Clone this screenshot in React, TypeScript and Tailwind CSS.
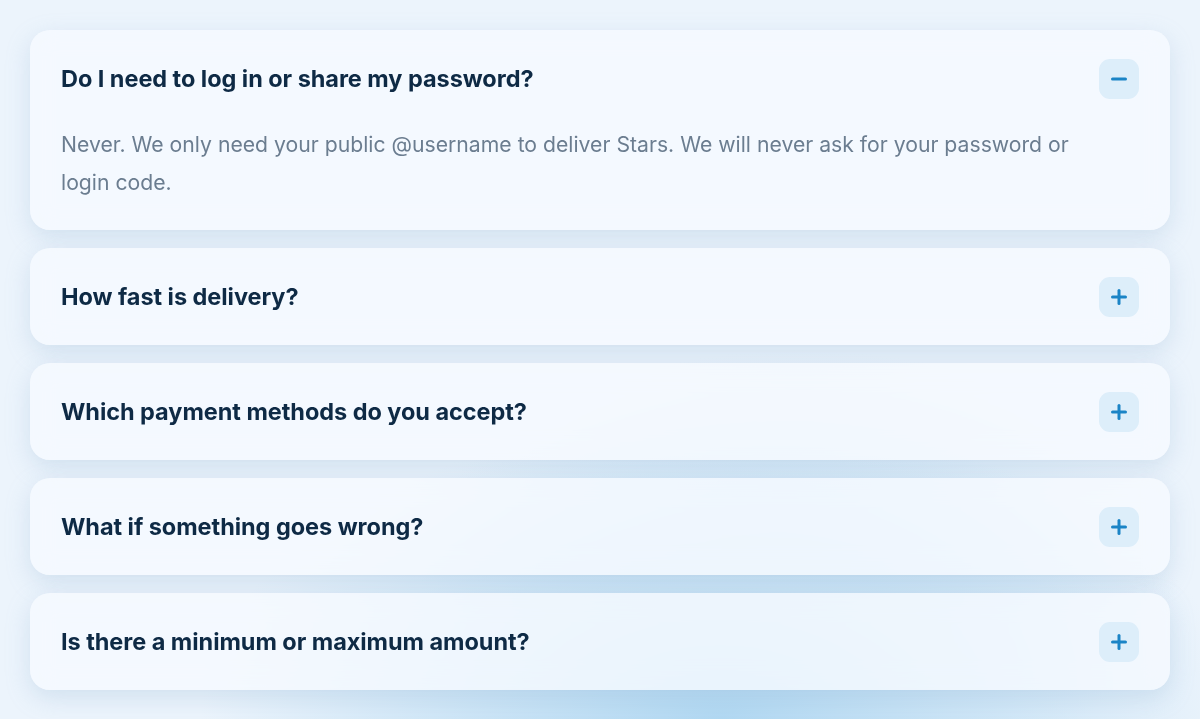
import { useState } from "react";

const faqs = [
  {
    q: "Do I need to log in or share my password?",
    a: "Never. We only need your public @username to deliver Stars. We will never ask for your password or login code.",
  },
  { q: "How fast is delivery?", a: "Usually within a few minutes after payment is confirmed." },
  { q: "Which payment methods do you accept?", a: "Cards, Apple Pay, Google Pay and popular crypto wallets." },
  { q: "What if something goes wrong?", a: "Contact support and we will sort it out or refund you." },
  { q: "Is there a minimum or maximum amount?", a: "Limits are shown at checkout for each package." },
];

function ToggleIcon({ open }: { open: boolean }) {
  return (
    <span className="flex h-10 w-10 shrink-0 items-center justify-center rounded-[11px] bg-[#ddeefa] text-[#1b84c6]">
      <svg width="16" height="16" viewBox="0 0 16 16" fill="none">
        <path d="M1.5 8h13" stroke="currentColor" strokeWidth="3" strokeLinecap="round" />
        {!open && <path d="M8 1.5v13" stroke="currentColor" strokeWidth="3" strokeLinecap="round" />}
      </svg>
    </span>
  );
}

export default function App() {
  const [openIdx, setOpenIdx] = useState<number | null>(0);

  return (
    <div
      className="min-h-screen w-full bg-[#ecf4fc] bg-[radial-gradient(ellipse_520px_300px_at_720px_720px,#b1d8f2_0%,#cbe4f6_45%,rgba(236,244,252,0)_100%),radial-gradient(ellipse_380px_220px_at_800px_570px,#d0e6f7_0%,rgba(236,244,252,0)_100%)] px-[30px] py-[30px]"
      style={{ fontFamily: "Inter, 'Noto Sans', sans-serif" }}
    >
      <div className="flex flex-col gap-[18px]">
        {faqs.map((f, i) => {
          const open = openIdx === i;
          return (
            <div
              key={i}
              className="rounded-[20px] bg-[#f6faff]/80 shadow-[0_8px_24px_rgba(140,175,210,0.28)] backdrop-blur-md"
            >
              <button
                onClick={() => setOpenIdx(open ? null : i)}
                className="flex h-[97px] w-full items-center justify-between pl-[31px] pr-[31px] text-left"
              >
                <span className="text-[23.5px] font-bold tracking-[-0.05px] text-[#0e2a45]">{f.q}</span>
                <ToggleIcon open={open} />
              </button>
              {open && (
                <p className="-mt-[2px] pb-[29px] pl-[31px] pr-[80px] text-[21.2px] leading-[38px] text-[#6b7d90]">
                  {f.a}
                </p>
              )}
            </div>
          );
        })}
      </div>
    </div>
  );
}
